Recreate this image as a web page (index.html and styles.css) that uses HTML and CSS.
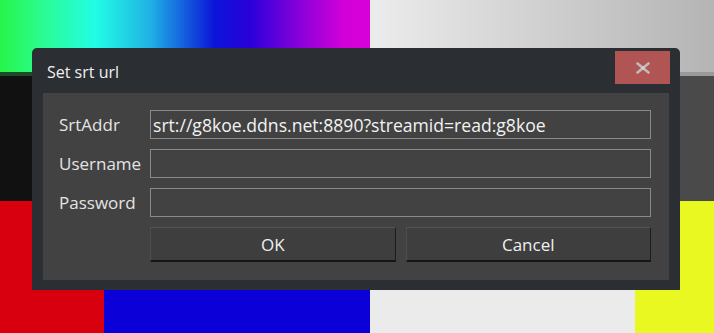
FILE: index.html
```html
<!DOCTYPE html>
<html>
<head>
    <title>Set srt url</title>
    <link rel="stylesheet" href="styles.css">
</head>
<body>
    <div class="pattern">
        <div class="band top">
            <div class="cell hues"></div>
            <div class="cell greys"></div>
        </div>
        <div class="band middle">
            <div class="cell black"></div>
            <div class="cell dim"></div>
        </div>
        <div class="band bottom">
            <div class="cell red"></div>
            <div class="cell blue"></div>
            <div class="cell white"></div>
            <div class="cell yellow"></div>
        </div>
    </div>

    <div class="dialog">
        <div class="titlebar">
            <span class="title">Set srt url</span>
            <button class="close" onclick="closeDialog()">
                <svg width="16" height="12" viewBox="0 0 16 12">
                    <path d="M2.5 1.5 L13.5 10.5 M13.5 1.5 L2.5 10.5" stroke="#c2b9b9" stroke-width="2.6" stroke-linecap="round"/>
                    <rect x="6.5" y="4.5" width="3" height="3" fill="#d6d0d0"/>
                </svg>
            </button>
        </div>
        <div class="panel">
            <form class="form" onsubmit="return false">
                <label for="addr">SrtAddr</label>
                <input id="addr" type="text" value="srt://g8koe.ddns.net:8890?streamid=read:g8koe">
                <label for="user">Username</label>
                <input id="user" type="text">
                <label for="pass">Password</label>
                <input id="pass" type="password">
                <div class="actions">
                    <button class="btn" onclick="submitUrl()">OK</button>
                    <button class="btn" onclick="closeDialog()">Cancel</button>
                </div>
            </form>
        </div>
    </div>

    <script>
        function submitUrl() {
            const addr = document.getElementById('addr').value;
            console.log('srt url set to', addr);
        }

        function closeDialog() {
            document.getElementById('addr').value = '';
        }
    </script>
</body>
</html>
```

FILE: styles.css
```css
body {
    margin: 0;
    width: 714px;
    height: 333px;
    overflow: hidden;
    font-family: "Open Sans", "Noto Sans", sans-serif;
}

.pattern {
    display: flex;
    flex-direction: column;
    height: 333px;
}

.band {
    display: flex;
}

.band.top {
    height: 72px;
}

.band.middle {
    height: 129px;
}

.band.bottom {
    flex: 1;
}

.cell {
    height: 100%;
}

.hues {
    width: 370px;
    background: linear-gradient(90deg, #27f54a 0px, #2bfc95 45px, #22fde4 95px, #1fb2e4 150px, #0b14d8 215px, #2a00da 250px, #8a00da 300px, #d400d8 345px, #d800d8 370px);
}

.greys {
    flex: 1;
    background: linear-gradient(90deg, #ececec, #b4b4b4);
}

.black {
    width: 370px;
    background: #111;
    border-top: 4px solid #1f4a2a;
    border-bottom: 1px solid #070707;
}

.dim {
    flex: 1;
    background: #4a4a4a;
    border-top: 4px solid #9a9a9a;
    border-bottom: 2px solid #111;
}

.red {
    width: 104px;
    background: #d8000e;
}

.blue {
    width: 266px;
    background: #0c00d8;
}

.white {
    width: 265px;
    background: #ebebeb;
}

.yellow {
    flex: 1;
    background: #e8f820;
}

.dialog {
    position: absolute;
    left: 32px;
    top: 48px;
    width: 648px;
    height: 242px;
    background: #2b2e33;
    border-radius: 5px 5px 0 0;
    display: flex;
    flex-direction: column;
}

.titlebar {
    height: 45px;
    display: flex;
    align-items: center;
    justify-content: space-between;
    padding: 0 10px 0 15px;
}

.title {
    color: #f0f0f0;
    font-size: 16px;
    margin-top: 2px;
}

.close {
    width: 55px;
    height: 33px;
    margin-top: -6px;
    border: none;
    padding: 0;
    background: #b05454;
    display: flex;
    align-items: center;
    justify-content: center;
    cursor: pointer;
}

.panel {
    margin: 0 11px 10px 11px;
    flex: 1;
    background: #424242;
    padding: 17px 18px 17px 16px;
}

.form {
    display: grid;
    grid-template-columns: 91px 1fr;
    grid-auto-rows: 29px;
    row-gap: 10px;
    align-items: center;
}

.form label {
    color: #e4e4e4;
    font-size: 17px;
}

.form input {
    height: 29px;
    box-sizing: border-box;
    border: 1px solid #8a8a8a;
    background: #424242;
    color: #f2f2f2;
    font-family: inherit;
    font-size: 17.6px;
    padding: 0 2px;
    outline: none;
}

.actions {
    grid-column: 2;
    display: grid;
    grid-template-columns: 1fr 1fr;
    column-gap: 10px;
    height: 35px;
    align-self: start;
}

.btn {
    background: #3e3e3e;
    color: #f0f0f0;
    font-family: inherit;
    font-size: 17px;
    border-top: 1px solid #555;
    border-left: 1px solid #4e4e4e;
    border-bottom: 2px solid #161616;
    border-right: 1px solid #1c1c1c;
    cursor: pointer;
}

.btn:hover {
    background: #474747;
}
```
